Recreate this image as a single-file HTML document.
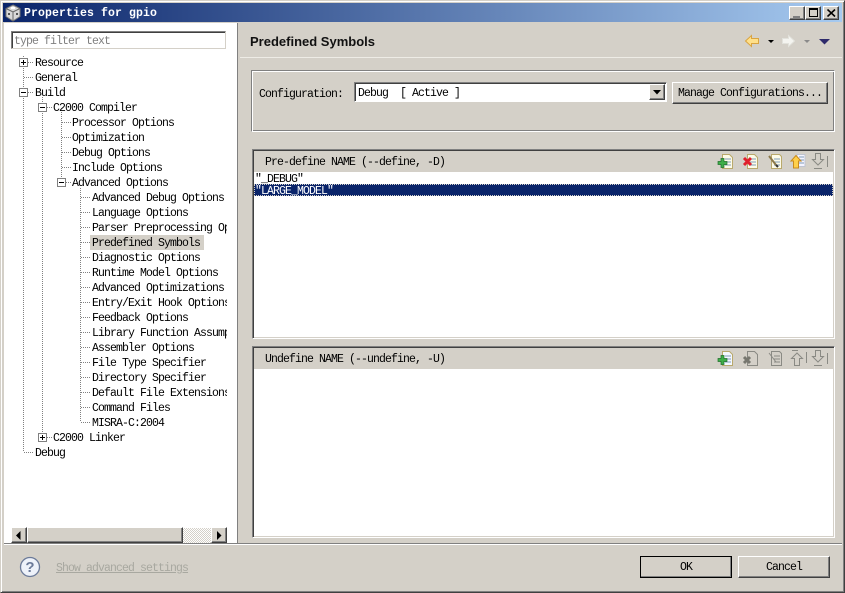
<!DOCTYPE html>
<html><head><meta charset="utf-8"><style>
html,body{margin:0;padding:0}
body{width:845px;height:593px;position:relative;overflow:hidden;background:#d4d0c8;font-family:"Liberation Mono",monospace;font-size:11.5px;letter-spacing:-.9px;color:#000}
div,span.a,svg{position:absolute;box-sizing:border-box}
.t{white-space:pre;line-height:15px;height:15px;margin-top:1px}
.raised{background:#d4d0c8;border:1px solid;border-color:#fff #404040 #404040 #fff;box-shadow:inset -1px -1px 0 #808080}
.sunk{border:1px solid;border-color:#808080 #fff #fff #808080;box-shadow:inset 1px 1px 0 #404040}
.c{text-align:center}
</style></head><body>
<div style="left:0;top:0;width:845px;height:593px;border:1px solid;border-color:#d4d0c8 #404040 #404040 #d4d0c8;box-shadow:inset 1px 1px 0 #fff,inset -1px -1px 0 #808080"></div>
<div style="left:3px;top:3px;width:839px;height:19px;background:linear-gradient(90deg,#0a246a,#a6caf0)"></div>
<svg style="left:4px;top:4px" width="18" height="18" viewBox="0 0 18 18"><path d="M9 1l7 3.500v8L9 17l-7-4.500v-8z" fill="#d8d8d8" stroke="#777"/><path d="M2 4.500L9 8l7-3.500M9 8v9" fill="none" stroke="#666"/><rect x="7" y="3" width="4" height="2" fill="#fff"/><rect x="4" y="9" width="2" height="2" fill="#555"/><rect x="12" y="9" width="2" height="2" fill="#555"/></svg>
<div class="t" style="left:24px;top:5px;color:#fff;font-weight:bold;font-size:11.500px;letter-spacing:.1px">Properties for gpio</div>
<div class="raised" style="left:789px;top:6px;width:16px;height:14px"><div style="left:3px;top:9px;width:7px;height:2px;background:#808080"></div></div>
<div class="raised" style="left:805px;top:6px;width:16px;height:14px"><div style="left:3px;top:1px;width:9px;height:9px;border:1px solid #000;border-top-width:2px"></div></div>
<div class="raised" style="left:823px;top:6px;width:16px;height:14px"><svg style="left:3px;top:2px" width="9" height="8"><path d="M0.500 0.500L8 7.500M8 0.500L0.500 7.500" stroke="#000" stroke-width="1.600"/></svg></div>

<!-- left tree pane -->
<div style="left:4px;top:23px;width:234px;height:520px;background:#fff;border-right:1px solid #808080"></div>
<div style="left:11px;top:31px;width:215px;height:18px;background:#fff;border:1px solid;border-color:#808080 #d4d0c8 #d4d0c8 #808080;box-shadow:inset 1px 1px 0 #404040"></div>
<div class="t" style="left:14px;top:33px;color:#808080">type filter text</div>

<svg style="left:0;top:0" width="240" height="530" fill="none" stroke="#808080" stroke-dasharray="1 1">
<path d="M23.500 56V452M42.500 97V437M61.500 112V182M80.500 188V422"/>
<path d="M28 62.500H33M24 77.500H33M28 92.500H33M24 452.500H33M47 107.500H52M47 437.500H52"/>
<path d="M62 122.500H71M62 137.500H71M62 152.500H71M62 167.500H71M66 182.500H71"/>
<path d="M81 197.500H90M81 212.500H90M81 227.500H90M81 242.500H90M81 257.500H90M81 272.500H90M81 287.500H90M81 302.500H90M81 317.500H90M81 332.500H90M81 347.500H90M81 362.500H90M81 377.500H90M81 392.500H90M81 407.500H90M81 422.500H90"/>
<g stroke-dasharray="none" stroke="#808080"><rect x="19.500" y="58.500" width="8" height="8" fill="#fff"/><rect x="19.500" y="88.500" width="8" height="8" fill="#fff"/><rect x="38.500" y="103.500" width="8" height="8" fill="#fff"/><rect x="57.500" y="178.500" width="8" height="8" fill="#fff"/><rect x="38.500" y="433.500" width="8" height="8" fill="#fff"/></g>
<path stroke-dasharray="none" stroke="#000" d="M21 62.500H26M23.500 60V65M21 92.500H26M40 107.500H45M59 182.500H64M40 437.500H45M42.500 435V440"/>
</svg>

<div style="left:90px;top:235px;width:114px;height:15px;background:#d4d0c8"></div>
<div style="left:0;top:0;width:227px;height:527px;overflow:hidden">
<div class="t" style="left:35px;top:55px">Resource</div>
<div class="t" style="left:35px;top:70px">General</div>
<div class="t" style="left:35px;top:85px">Build</div>
<div class="t" style="left:53px;top:100px">C2000 Compiler</div>
<div class="t" style="left:72px;top:115px">Processor Options</div>
<div class="t" style="left:72px;top:130px">Optimization</div>
<div class="t" style="left:72px;top:145px">Debug Options</div>
<div class="t" style="left:72px;top:160px">Include Options</div>
<div class="t" style="left:72px;top:175px">Advanced Options</div>
<div class="t" style="left:92px;top:190px">Advanced Debug Options</div>
<div class="t" style="left:92px;top:205px">Language Options</div>
<div class="t" style="left:92px;top:220px">Parser Preprocessing Options</div>
<div class="t" style="left:92px;top:235px">Predefined Symbols</div>
<div class="t" style="left:92px;top:250px">Diagnostic Options</div>
<div class="t" style="left:92px;top:265px">Runtime Model Options</div>
<div class="t" style="left:92px;top:280px">Advanced Optimizations</div>
<div class="t" style="left:92px;top:295px">Entry/Exit Hook Options</div>
<div class="t" style="left:92px;top:310px">Feedback Options</div>
<div class="t" style="left:92px;top:325px">Library Function Assumptions</div>
<div class="t" style="left:92px;top:340px">Assembler Options</div>
<div class="t" style="left:92px;top:355px">File Type Specifier</div>
<div class="t" style="left:92px;top:370px">Directory Specifier</div>
<div class="t" style="left:92px;top:385px">Default File Extensions</div>
<div class="t" style="left:92px;top:400px">Command Files</div>
<div class="t" style="left:92px;top:415px">MISRA-C:2004</div>
<div class="t" style="left:53px;top:430px">C2000 Linker</div>
<div class="t" style="left:35px;top:445px">Debug</div>
</div>

<!-- scrollbar -->
<div style="left:27px;top:528px;width:184px;height:15px;background:repeating-conic-gradient(#d4d0c8 0 25%,#fff 0 50%) 0 0/2px 2px"></div>
<div class="raised" style="left:11px;top:527px;width:16px;height:16px"><svg style="left:4px;top:3px" width="6" height="9"><path d="M4.500 0v9L0 4.500z"/></svg></div>
<div class="raised" style="left:27px;top:527px;width:156px;height:16px"></div>
<div class="raised" style="left:211px;top:527px;width:16px;height:16px"><svg style="left:5px;top:3px" width="6" height="9"><path d="M0 0v9L4.500 4.500z"/></svg></div>
<div style="left:4px;top:543px;width:838px;height:1px;background:#808080"></div>
<div style="left:4px;top:544px;width:838px;height:1px;background:#fff"></div>

<!-- right header -->
<div class="t" style="left:250px;top:32px;height:17px;line-height:17px;font-family:'Liberation Sans',sans-serif;font-weight:bold;font-size:13px;letter-spacing:0;color:#111">Predefined Symbols</div>
<div style="left:240px;top:57px;width:602px;height:1px;background:#eeece6"></div>
<svg style="left:744px;top:33px" width="92" height="16">
<path d="M1.500 8l6-5.500v3h7v5h-7v3z" fill="#ffe08a" stroke="#d9a441"/>
<path d="M24 7h6l-3 3z" fill="#000"/>
<path d="M38.500 5.500h6v-3l6 5.500-6 5.500v-3h-6z" fill="#f4f4f0" stroke="#e2e2dc"/>
<path d="M60 7h6l-3 3z" fill="#8a8a8a"/>
<path d="M75 6h11l-5.500 5.500z" fill="#2e2a6b"/>
</svg>

<!-- configuration group -->
<div style="left:251px;top:70px;width:584px;height:62px;border:1px solid;border-color:#808080 #fff #fff #808080;box-shadow:inset 1px 1px 0 #fff,inset -1px -1px 0 #808080"></div>
<div class="t" style="left:259px;top:86px">Configuration:</div>
<div class="sunk" style="left:354px;top:82px;width:313px;height:20px;background:#fff"></div>
<div class="t" style="left:358px;top:85px">Debug  [ Active ]</div>
<div class="raised" style="left:649px;top:84px;width:16px;height:16px"><svg style="left:3px;top:5px" width="9" height="5"><path d="M0 0h8L4 4.500z"/></svg></div>
<div class="raised" style="left:672px;top:82px;width:156px;height:22px"></div>
<div class="t" style="left:678px;top:85px">Manage Configurations...</div>

<!-- Pre-define -->
<div class="sunk" style="left:252px;top:149px;width:583px;height:190px"></div>
<div style="left:254px;top:172px;width:579px;height:165px;background:#fff"></div>
<div class="t" style="left:265px;top:154px">Pre-define NAME (--define, -D)</div>
<div class="t" style="left:255px;top:171px">"_DEBUG"</div>
<div style="left:254px;top:184px;width:579px;height:12px;background:#0a246a;border:1px dotted #d4d0c8"></div>
<div class="t" style="left:255px;top:183px;color:#fff">"LARGE_MODEL"</div>
<svg style="left:717px;top:153px" width="116" height="18">
<path d="M5.500 1.500h7l3 3v11h-10z" fill="#fdfbe8" stroke="#b9a96c"/><path d="M8 6h6M8 9h6M8 12h6" stroke="#7f9db9"/><path d="M1 8.500h3v-3h3v3h3v3H7v3H4v-3H1z" fill="#3fae49" stroke="#1f6f2a" stroke-width=".7"/>
<path d="M30.500 1.500h7l3 3v11h-10z" fill="#fdfbe8" stroke="#b9a96c"/><path d="M33 6h6M33 9h6M33 12h6" stroke="#7f9db9"/><path d="M27 5l7 7M34 5l-7 7" stroke="#e0202c" stroke-width="3"/>
<path d="M54.500 1.500h8l2 2v12h-10z" fill="#fdfbe8" stroke="#b9a96c"/><path d="M57 6h6M57 9h6M57 12h6" stroke="#7f9db9"/><path d="M52 3l7 9" stroke="#8d7a4a" stroke-width="2"/><path d="M59 12l2 2" stroke="#333" stroke-width="2"/>
<path d="M80 1.500h8v12h-8z" fill="#f4f4ff" stroke="#c0c4d0"/><path d="M82 4h5M82 7h5M82 10h5" stroke="#7f9db9"/><path d="M79 2.500l5 5.500h-2.500v7h-5V8H74z" fill="#ffd04a" stroke="#c98a1c"/>
<path d="M98.500 .5h5v6h3L101 12l-5.500-5.500h3zM97 15.500h8" fill="none" stroke="#8a8a84"/><path d="M110.500 3v11" stroke="#8a8a84"/>
</svg>

<!-- Undefine -->
<div class="sunk" style="left:252px;top:346px;width:583px;height:192px"></div>
<div style="left:254px;top:369px;width:579px;height:167px;background:#fff"></div>
<div class="t" style="left:265px;top:351px">Undefine NAME (--undefine, -U)</div>
<svg style="left:717px;top:350px" width="116" height="18">
<path d="M5.500 1.500h7l3 3v11h-10z" fill="#f4f8ff" stroke="#b9a96c"/><path d="M8 6h6M8 9h6M8 12h6" stroke="#7f9db9"/><path d="M1 8.500h3v-3h3v3h3v3H7v3H4v-3H1z" fill="#3fae49" stroke="#1f6f2a" stroke-width=".7"/>
<g fill="none" stroke="#8a8a84">
<path d="M30.500 1.500h7l3 3v11h-10z"/><path d="M27 7l6 6M33 7l-6 6" stroke="#77776f" stroke-width="3"/>
<path d="M54.500 1.500h8l2 2v12h-10zM57 6h6M57 9h6M57 12h6M52 3l7 9"/>
<path d="M77.500 15.500v-7h-3l5.500-5.500 5.500 5.500h-3v7zM75 .5h6M89.500 2v11"/>
<path d="M98.500 .5h5v6h3L101 12l-5.500-5.500h3zM97 15.500h8M110.500 3v11"/>
</g>
</svg>

<!-- footer -->
<svg style="left:19px;top:556px" width="22" height="22"><circle cx="11" cy="11" r="9.500" fill="#eef2fa" stroke="#6b7a99" stroke-width="1.300"/><text x="11" y="16" text-anchor="middle" font-family="Liberation Sans,sans-serif" font-size="15" font-weight="bold" fill="#6b7a99" letter-spacing="0">?</text></svg>
<div class="t" style="left:56px;top:560px;color:#a8a8a0;text-decoration:underline">Show advanced settings</div>
<div class="raised" style="left:640px;top:556px;width:92px;height:22px;outline:1px solid #000;outline-offset:-1px"></div>
<div class="t c" style="left:640px;top:559px;width:92px">OK</div>
<div class="raised" style="left:738px;top:556px;width:92px;height:22px"></div>
<div class="t c" style="left:738px;top:559px;width:92px">Cancel</div>
</body></html>
